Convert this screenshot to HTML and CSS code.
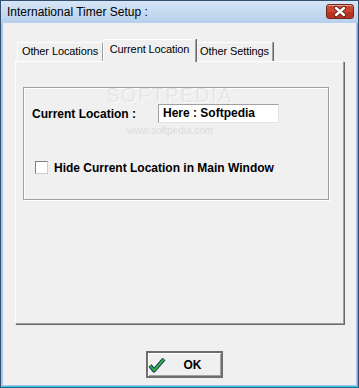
FILE: index.html
```html
<!DOCTYPE html>
<html>
  <head>
    <meta charset="UTF-8">
    <link rel="stylesheet" href="styles.css">
    <title>International Timer Setup</title>
  </head>
  <body>
    <div class="window">
      <div class="titlebar">
        <span class="title">International Timer Setup :</span>
        <span class="close-btn">
          <svg width="28" height="15" viewBox="0 0 28 15">
            <path d="M10 4 L18 11 M18 4 L10 11" stroke="#5a1f18" stroke-width="4.2" stroke-linecap="round"/>
            <path d="M10 4 L18 11 M18 4 L10 11" stroke="#ffffff" stroke-width="2.4" stroke-linecap="round"/>
          </svg>
        </span>
      </div>
      <div class="client">
        <div class="tabs">
          <div class="tab tab-first">Other Locations</div>
          <div class="tab active">Current Location</div>
          <div class="tab tab-last">Other Settings</div>
        </div>
        <div class="panel">
          <div class="group">
            <div class="watermark">SOFTPEDIA<sup>™</sup></div>
            <div class="watermark-url">www.softpedia.com</div>
            <div class="row">
              <span class="label">Current Location :</span>
              <div class="field">Here : Softpedia</div>
            </div>
            <div class="check-row">
              <span class="checkbox"></span>
              <span class="check-text">Hide Current Location in Main Window</span>
            </div>
          </div>
        </div>
        <div class="footer">
          <button class="ok">
            <svg width="18" height="16" viewBox="0 0 18 16">
              <path d="M2 8.5 L6 13.5 L16 2" fill="none" stroke="#1b2b7a" stroke-width="4" stroke-linejoin="round"/>
              <path d="M2 8.5 L6 13.5 L16 2" fill="none" stroke="#2fb82f" stroke-width="2" stroke-linejoin="round"/>
            </svg>
            <span class="ok-text">OK</span>
          </button>
        </div>
      </div>
    </div>
  </body>
</html>
```

FILE: styles.css
```css
body {
    margin: 0;
    background: #ffffff;
}

.window {
    width: 359px;
    height: 388px;
    box-sizing: border-box;
    border: 1px solid #34506f;
    border-bottom-color: #1f6f8a;
    background: #a9c6e9;
    display: flex;
    flex-direction: column;
    box-shadow: inset -1px -1px 0 #3cc3e6;
}

.titlebar {
    height: 22px;
    display: flex;
    align-items: flex-start;
    padding: 0 4px 0 6px;
    background: linear-gradient(#d6e5f6, #b7cfeb);
}

.title {
    font-family: "Liberation Sans", Arial, sans-serif;
    font-size: 12px;
    line-height: 23px;
    color: #000;
}

.close-btn {
    display: block;
    margin-left: auto;
    margin-top: 3px;
    width: 28px;
    height: 15px;
    box-sizing: border-box;
    border: 1px solid #6e2a20;
    border-radius: 3px;
    background: #c9472f;
    box-shadow: inset 0 1px 0 #eaa090, inset 0 -6px 0 #b8341e;
    overflow: hidden;
}

.close-btn svg {
    display: block;
    margin: -1px;
}

.client {
    flex: 1;
    margin: 0 2px 2px;
    background: #f0f0f0;
    padding: 16px 12px 0;
    font-family: "Liberation Sans", Arial, sans-serif;
}

.tabs {
    display: flex;
    align-items: flex-end;
    height: 22px;
    margin-left: 2px;
}

.tab {
    height: 19px;
    box-sizing: border-box;
    border: 1px solid #fff;
    border-bottom: none;
    border-right: 1px solid #a0a0a0;
    box-shadow: 1px 0 0 #696969;
    font-size: 11px;
    letter-spacing: -0.1px;
    text-align: center;
    line-height: 17px;
    color: #000;
    background: #f0f0f0;
}

.tab-first {
    width: 86px;
}

.tab-last {
    width: 77px;
}

.tab.active {
    width: 93px;
    height: 23px;
    margin-bottom: -1px;
    position: relative;
    z-index: 1;
    line-height: 18px;
}

.panel {
    height: 263px;
    box-sizing: border-box;
    border: 1px solid #fff;
    border-right-color: #a0a0a0;
    border-bottom-color: #a0a0a0;
    box-shadow: 1px 1px 0 #696969;
    padding: 25px 0 0 7px;
}

.group {
    position: relative;
    width: 306px;
    height: 113px;
    box-sizing: border-box;
    border: 1px solid #a0a0a0;
    box-shadow: inset 1px 1px 0 #fff, 1px 1px 0 #fff;
    padding: 16px 0 0 8px;
    font-size: 12px;
    font-weight: bold;
    color: #000;
}

.watermark {
    position: absolute;
    left: 82px;
    top: 0;
    height: 14px;
    font-family: "Liberation Sans", Arial, sans-serif;
    font-size: 20px;
    line-height: 14px;
    font-weight: normal;
    letter-spacing: 1.5px;
    color: #e6e6e6;
    text-shadow: 1px 1px 0 #fbfbfb;
}

.watermark sup {
    font-size: 7px;
    vertical-align: top;
    line-height: 7px;
}

.watermark-url {
    position: absolute;
    left: 103px;
    top: 37px;
    font-size: 10px;
    line-height: 11px;
    font-weight: normal;
    color: #dcdcdc;
}

.row {
    display: flex;
    align-items: center;
    height: 19px;
    position: relative;
}

.label {
    width: 126px;
}

.field {
    width: 121px;
    height: 19px;
    box-sizing: border-box;
    background: #fff;
    border: 1px solid #a0a0a0;
    border-right-color: #e3e3e3;
    border-bottom-color: #e3e3e3;
    padding-left: 4px;
    line-height: 17px;
}

.check-row {
    display: flex;
    align-items: center;
    height: 13px;
    margin-top: 38px;
    position: relative;
}

.checkbox {
    width: 13px;
    height: 13px;
    box-sizing: border-box;
    margin-left: 3px;
    background: #fff;
    border: 1px solid #808080;
    border-right-color: #cfcfcf;
    border-bottom-color: #cfcfcf;
}

.check-text {
    margin-left: 6px;
}

.footer {
    display: flex;
    justify-content: center;
    padding-left: 9px;
    margin-top: 27px;
}

.ok {
    width: 77px;
    height: 27px;
    box-sizing: border-box;
    border: 2px solid #6e6e6e;
    box-shadow: inset 1px 1px 0 #fff, inset -1px -1px 0 #a0a0a0;
    background: #f0f0f0;
    display: flex;
    align-items: center;
    padding: 0;
    font-family: "Liberation Sans", Arial, sans-serif;
    font-size: 12px;
    font-weight: bold;
    color: #000;
}

.ok-text {
    margin-left: 18px;
}
```
